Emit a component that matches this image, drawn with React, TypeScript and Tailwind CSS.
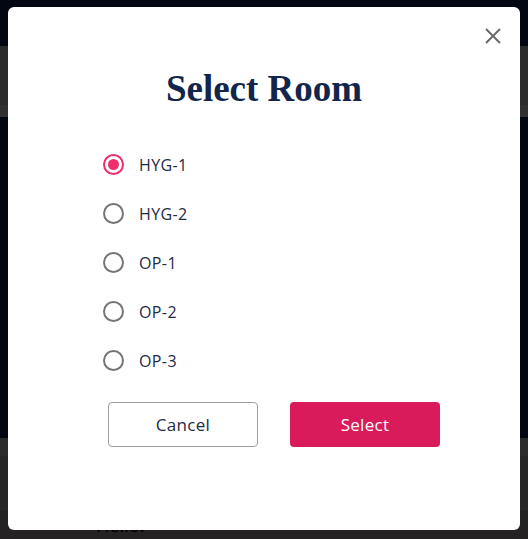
import { useState } from "react";

const ROOMS = ["HYG-1", "HYG-2", "OP-1", "OP-2", "OP-3"];

export default function App() {
  const [room, setRoom] = useState("HYG-1");

  return (
    <div className="relative h-[539px] w-[528px] overflow-hidden bg-[#030712]">
      {/* dimmed page behind the dialog */}
      <div className="flex h-full flex-col">
        <div className="h-[46px] bg-[#030712]" />
        <div className="h-[59px] bg-[#2b2b2b]" />
        <div className="h-[12px] bg-[#303030]" />
        <div className="h-[323px] bg-[#030712]" />
        <div className="h-[18px] bg-[#2b2b2b]" />
        <div className="h-[55px] bg-[#262626]" />
        <div className="flex-1 bg-[#242222] pl-[96px] font-['Noto_Sans',sans-serif] text-lg text-black">Hello!</div>
      </div>

      <div className="absolute left-[8px] top-[7px] flex h-[523px] w-[512px] flex-col rounded-[6px] bg-white pt-[60px]">
        <button className="absolute right-[18px] top-[20px] text-[#6b6b6b]" aria-label="Close">
          <svg width="18" height="18" viewBox="0 0 18 18" fill="none" stroke="currentColor" strokeWidth="2">
            <path d="M2 2l14 14M16 2L2 16" />
          </svg>
        </button>

        <h2 className="text-center font-['Liberation_Serif',serif] text-[37px] font-bold leading-[44px] text-[#12254a]">
          Select Room
        </h2>

        <div className="mt-[29px] flex flex-col pl-[95px]">
          {ROOMS.map((r) => {
            const on = r === room;
            return (
              <label key={r} className="flex h-[49px] cursor-pointer items-center gap-[15px]" onClick={() => setRoom(r)}>
                <span className={`flex h-[21px] w-[21px] items-center justify-center rounded-full border-2 ${on ? "border-[#ee2d6b]" : "border-[#757575]"}`}>
                  {on && <span className="h-[11px] w-[11px] rounded-full bg-[#ee2d6b]" />}
                </span>
                <span className="font-['Open_Sans',sans-serif] text-[16px] tracking-[0.4px] text-[#1e2a44]">{r}</span>
              </label>
            );
          })}
        </div>

        <div className="mt-[17px] flex gap-[32px] pl-[100px]">
          <button className="h-[45px] w-[150px] rounded-[4px] border border-[#9e9e9e] bg-white font-['Open_Sans',sans-serif] text-[17px] tracking-[0.3px] text-[#1e2a44]">
            Cancel
          </button>
          <button className="h-[45px] w-[150px] rounded-[4px] bg-[#d91b5c] font-['Open_Sans',sans-serif] text-[17px] tracking-[0.3px] text-white">
            Select
          </button>
        </div>
      </div>
    </div>
  );
}
